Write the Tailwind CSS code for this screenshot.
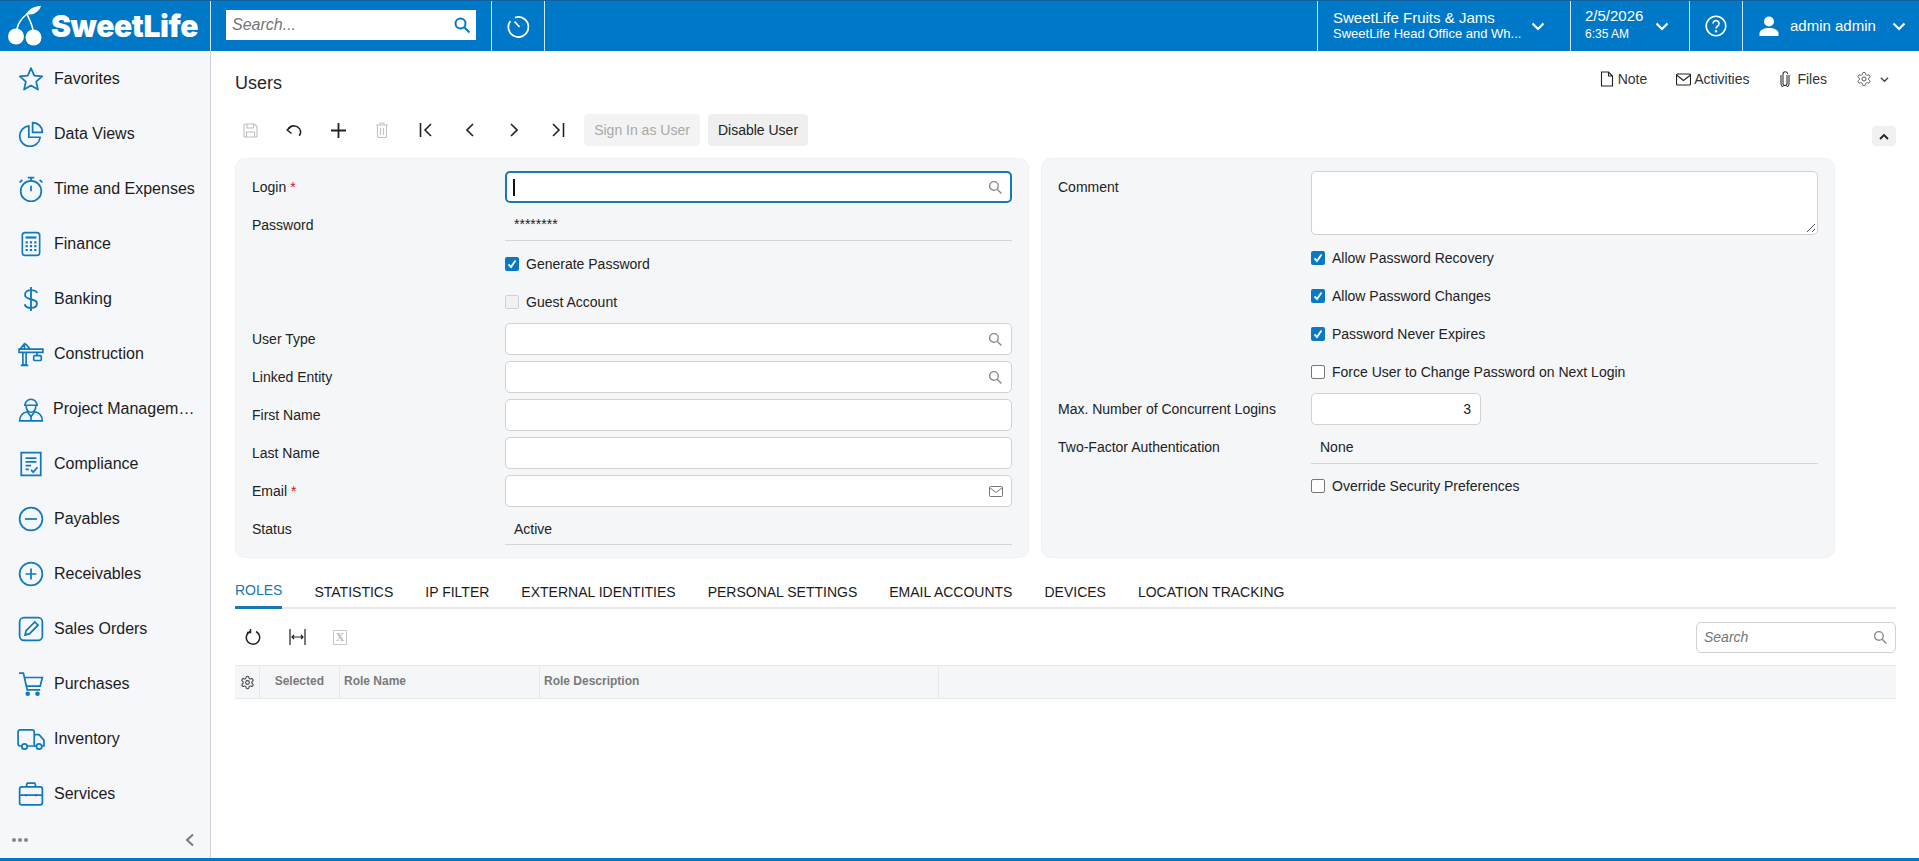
<!DOCTYPE html>
<html lang="en">
<head>
  <meta charset="UTF-8" />
  <title>Users</title>
  <script src="https://cdn.jsdelivr.net/npm/@tailwindcss/browser@4"></script>
</head>
<body class="h-screen overflow-hidden flex flex-col bg-white text-[14px] text-[#222] font-['Liberation_Sans',Arial,sans-serif]">

  <!-- Top bar -->
  <header class="h-[51px] shrink-0 flex bg-[#0078c8] border-t border-[#12609c] text-white">
    <div class="w-[211px] shrink-0 flex items-center border-r border-[#cfe6f5] relative">
      <svg class="ml-[7px] w-[36px] h-[42px] -mt-[2px]" viewBox="0 0 36 42" fill="none">
        <circle cx="9" cy="32.5" r="8" fill="#fff"/>
        <circle cx="26.5" cy="33.5" r="8" fill="#fff"/>
        <path d="M10 25 C11 19 15 14 20 10 C22 15 25 20 26 26" stroke="#fff" stroke-width="1.6"/>
        <path d="M19 10 C23 4 28 2 34 2 C32 8 26 12 19 10 Z" fill="#fff"/>
      </svg>
      <span class="ml-[8px] text-[30px] leading-none font-black tracking-[-0.4px] font-['Inter',sans-serif]">SweetLife</span>
    </div>
    <div class="w-[281px] shrink-0 flex items-center pl-[15px] border-r border-[#cfe6f5]">
      <div class="w-[250px] h-[30px] -mt-[2px] bg-white flex items-center justify-between pl-[6px] pr-[5px]">
        <span class="italic text-[16px] text-[#757575]">Search...</span>
        <svg class="w-[18px] h-[18px] text-[#0078c8]" viewBox="0 0 18 18" fill="none" stroke="currentColor" stroke-width="2"><circle cx="7.5" cy="7.5" r="5"/><path d="M11.5 11.5l5 5"/></svg>
      </div>
    </div>
    <div class="w-[53px] shrink-0 flex items-center justify-center border-r border-[#cfe6f5]">
      <svg class="w-[24px] h-[24px] ml-[1px]" viewBox="0 0 24 24" fill="none" stroke="currentColor" stroke-width="1.7"><path d="M8 3.6A10 10 0 1 1 3.4 7"/><path d="M7.5 7.5l5 5.5"/></svg>
    </div>
    <div class="flex-1"></div>
    <div class="w-[253px] shrink-0 flex items-center pl-[15px] border-l border-[#cfe6f5]">
      <div class="w-[198px] leading-[16px]">
        <div class="text-[15px] whitespace-nowrap">SweetLife Fruits &amp; Jams</div>
        <div class="text-[13px] whitespace-nowrap">SweetLife Head Office and Wh...</div>
      </div>
      <svg class="ml-[-1px] w-[16px] h-[16px]" viewBox="0 0 16 16" fill="none" stroke="currentColor" stroke-width="2.2"><path d="M2.5 5.5L8 11l5.5-5.5"/></svg>
    </div>
    <div class="w-[119px] shrink-0 flex items-center pl-[14px] border-l border-[#cfe6f5]">
      <div class="w-[69px] leading-[16px]">
        <div class="text-[15px] -mt-[2px] mb-[2px]">2/5/2026</div>
        <div class="text-[12px]">6:35 AM</div>
      </div>
      <svg class="w-[16px] h-[16px]" viewBox="0 0 16 16" fill="none" stroke="currentColor" stroke-width="2.2"><path d="M2.5 5.5L8 11l5.5-5.5"/></svg>
    </div>
    <div class="w-[53px] shrink-0 flex items-center justify-center border-l border-[#cfe6f5]">
      <svg class="w-[22px] h-[22px]" viewBox="0 0 22 22" fill="none" stroke="currentColor" stroke-width="1.6"><circle cx="11" cy="11" r="9.8"/><path d="M8 8.6a3 3 0 1 1 4.6 2.5c-1 .7-1.6 1.2-1.6 2.5"/><circle cx="11" cy="16.3" r=".5" fill="currentColor"/></svg>
    </div>
    <div class="flex-1 max-w-[177px] flex items-center pl-[16px] border-l border-[#cfe6f5]">
      <svg class="w-[20px] h-[20px]" viewBox="0 0 20 20" fill="currentColor"><circle cx="10" cy="5.5" r="5"/><path d="M0.5 20v-2.5C0.5 14 5 12 10 12s9.500 2 9.500 5.500V20z"/></svg>
      <span class="ml-[11px] text-[15px]">admin admin</span>
      <svg class="ml-[15px] w-[16px] h-[16px]" viewBox="0 0 16 16" fill="none" stroke="currentColor" stroke-width="2.2"><path d="M2.5 5.5L8 11l5.500-5.500"/></svg>
    </div>
  </header>

  <div class="flex-1 flex min-h-0">

    <!-- Sidebar -->
    <aside class="w-[211px] shrink-0 flex flex-col bg-[#f5f7fa] border-r border-[#cdd0d4] text-[16px] text-[#1c1c1c]">
      <nav class="flex-1">
        <a class="h-[55px] flex items-center">
          <svg class="w-[26px] h-[26px] ml-[18px] mr-[10px] text-[#0f79be]" viewBox="0 0 24 24" fill="none" stroke="currentColor" stroke-width="1.6" stroke-linejoin="round"><path d="M12 2l3 6.800 7.300.8-5.500 4.900 1.600 7.300L12 18.100l-6.400 3.700 1.600-7.300L1.700 9.600 9 8.800z"/></svg>
          <span>Favorites</span>
        </a>
        <a class="h-[55px] flex items-center">
          <svg class="w-[26px] h-[26px] ml-[18px] mr-[10px] text-[#0f79be]" viewBox="0 0 24 24" fill="none" stroke="currentColor" stroke-width="1.6" stroke-linejoin="round"><path d="M10 4.500a9.500 9.500 0 1 0 10.500 10.500H10z"/><path d="M13.500 1.500a9 9 0 0 1 9 9h-9z"/></svg>
          <span>Data Views</span>
        </a>
        <a class="h-[55px] flex items-center">
          <svg class="w-[26px] h-[26px] ml-[18px] mr-[10px] text-[#0f79be]" viewBox="0 0 24 24" fill="none" stroke="currentColor" stroke-width="1.6"><circle cx="12" cy="14" r="9.500"/><path d="M9 1.500h6M12 1.500v3M12 9v5M20 3.500l2.500 2.500M4 3.500L1.500 6"/></svg>
          <span>Time and Expenses</span>
        </a>
        <a class="h-[55px] flex items-center">
          <svg class="w-[26px] h-[26px] ml-[18px] mr-[10px] text-[#0f79be]" viewBox="0 0 24 24" fill="none" stroke="currentColor" stroke-width="1.500"><rect x="4" y="1.500" width="16" height="21" rx="2.500"/><path d="M7 6h10" stroke-width="2"/><path d="M7 10.500h10M7 14h10M7 17.500h10" stroke-width="2" stroke-dasharray="2 2"/></svg>
          <span>Finance</span>
        </a>
        <a class="h-[55px] flex items-center">
          <svg class="w-[26px] h-[26px] ml-[18px] mr-[10px] text-[#0f79be]" viewBox="0 0 24 24" fill="none" stroke="currentColor" stroke-width="1.700"><path d="M12 1v22M17.500 6.500C17 4.500 15 3.800 12 3.800c-3.500 0-5.500 1.700-5.500 4.200 0 5.800 11 2.700 11 8.200 0 2.500-2.200 4-5.500 4-3.200 0-5.300-1-5.800-3.400"/></svg>
          <span>Banking</span>
        </a>
        <a class="h-[55px] flex items-center">
          <svg class="w-[26px] h-[26px] ml-[18px] mr-[10px] text-[#0f79be]" viewBox="0 0 24 24" fill="none" stroke="currentColor" stroke-width="1.500"><path d="M1 7.500h22v3H1zM6 2.500L2 7.500M7 2.500l4 5M6 1.500v6M4.500 10.500v11.500h3V10.500M2.500 22.500h7"/><path d="M17.500 10.500v3"/><rect x="14.500" y="13.500" width="7" height="4.500" rx="1"/></svg>
          <span>Construction</span>
        </a>
        <a class="h-[55px] flex items-center">
          <svg class="w-[26px] h-[26px] ml-[18px] mr-[9px] text-[#0f79be]" viewBox="0 0 24 24" fill="none" stroke="currentColor" stroke-width="1.500"><path d="M6.500 8.500a5.500 5.500 0 0 1 11 0zM5.500 8.500h13M7.500 9c0 3.500 2 6 4.500 6s4.500-2.500 4.500-6"/><path d="M8.500 14.500C4 15.500 1.500 17.500 1.500 23h21c0-5.500-2.500-7.500-7-8.500L12 19z"/><path d="M12 19v4"/></svg>
          <span class="whitespace-nowrap">Project Managem…</span>
        </a>
        <a class="h-[55px] flex items-center">
          <svg class="w-[26px] h-[26px] ml-[18px] mr-[10px] text-[#0f79be]" viewBox="0 0 24 24" fill="none" stroke="currentColor" stroke-width="1.600"><path d="M3 1.500h18v21H3z"/><path d="M7 6.500h10M7 10h10M7 13.500h5M7 17h3M12 17.500l2 2 4-4.500"/></svg>
          <span>Compliance</span>
        </a>
        <a class="h-[55px] flex items-center">
          <svg class="w-[26px] h-[26px] ml-[18px] mr-[10px] text-[#0f79be]" viewBox="0 0 24 24" fill="none" stroke="currentColor" stroke-width="1.600"><circle cx="12" cy="12" r="10.500"/><path d="M6.500 12h11"/></svg>
          <span>Payables</span>
        </a>
        <a class="h-[55px] flex items-center">
          <svg class="w-[26px] h-[26px] ml-[18px] mr-[10px] text-[#0f79be]" viewBox="0 0 24 24" fill="none" stroke="currentColor" stroke-width="1.600"><circle cx="12" cy="12" r="10.500"/><path d="M7 12h10M12 7v10"/></svg>
          <span>Receivables</span>
        </a>
        <a class="h-[55px] flex items-center">
          <svg class="w-[26px] h-[26px] ml-[18px] mr-[10px] text-[#0f79be]" viewBox="0 0 24 24" fill="none" stroke="currentColor" stroke-width="1.600"><rect x="1.500" y="1.500" width="21" height="21" rx="4"/><path d="M6.500 17.500l1-4L15.500 5.500l3 3-8 8z"/></svg>
          <span>Sales Orders</span>
        </a>
        <a class="h-[55px] flex items-center">
          <svg class="w-[26px] h-[26px] ml-[18px] mr-[10px] text-[#0f79be]" viewBox="0 0 24 24" fill="none" stroke="currentColor" stroke-width="1.600"><path d="M1 2h4l3.500 15.500h12M6 6h16.500l-2 8H8"/><circle cx="9" cy="21" r="1.300" fill="currentColor"/><circle cx="18" cy="21" r="1.300" fill="currentColor"/></svg>
          <span>Purchases</span>
        </a>
        <a class="h-[55px] flex items-center">
          <svg class="w-[28px] h-[26px] ml-[17px] mr-[9px] text-[#0f79be]" viewBox="0 0 26 24" fill="none" stroke="currentColor" stroke-width="1.600"><path d="M4.500 18.500H3a2 2 0 0 1-2-2v-11a2 2 0 0 1 2-2h11a2 2 0 0 1 2 2v13H9.500"/><path d="M16 8h4.500l4.500 5v5.500h-2M16 18.500h2"/><circle cx="7" cy="19" r="2.500"/><circle cx="20.500" cy="19" r="2.500"/></svg>
          <span>Inventory</span>
        </a>
        <a class="h-[55px] flex items-center">
          <svg class="w-[26px] h-[26px] ml-[18px] mr-[10px] text-[#0f79be]" viewBox="0 0 24 24" fill="none" stroke="currentColor" stroke-width="1.600"><rect x="1.500" y="5.500" width="21" height="16.500" rx="2"/><path d="M8 5.500V3a1 1 0 0 1 1-1h6a1 1 0 0 1 1 1v2.500M1.500 13H7M17 13h5.500M7.500 12v2M16.500 12v2M7.500 13h9"/></svg>
          <span>Services</span>
        </a>
      </nav>
      <div class="h-[37px] shrink-0 flex items-center justify-between pl-[12px] pr-[14px] text-[#77797c]">
        <div class="flex gap-[2px]">
          <span class="w-[4px] h-[4px] rounded-full bg-[#85878a]"></span>
          <span class="w-[4px] h-[4px] rounded-full bg-[#85878a]"></span>
          <span class="w-[4px] h-[4px] rounded-full bg-[#85878a]"></span>
        </div>
        <svg class="w-[12px] h-[14px]" viewBox="0 0 12 14" fill="none" stroke="currentColor" stroke-width="2"><path d="M9 1.500L3 7l6 5.500"/></svg>
      </div>
    </aside>

    <!-- Main -->
    <main class="flex-1 min-w-0 pl-[24px] pr-[23px]">

      <div class="h-[63px] flex items-start justify-between">
        <h1 class="mt-[21px] text-[18px] leading-[22px] text-[#262626]">Users</h1>
        <div class="mt-[17px] h-[22px] flex items-center text-[#333]">
          <svg class="w-[14px] h-[16px] mr-[4px]" viewBox="0 0 14 16" fill="none" stroke="#222" stroke-width="1.100"><path d="M1.500 1h7l4 4v10h-11zM8.500 1v4h4"/></svg>
          <span>Note</span>
          <svg class="ml-[29px] w-[15px] h-[13px] mr-[3px]" viewBox="0 0 15 13" fill="none" stroke="#222" stroke-width="1.100"><rect x=".5" y="1" width="14" height="11" rx="1"/><path d="M.5 2l7 5.500 7-5.500"/></svg>
          <span>Activities</span>
          <svg class="ml-[31px] w-[10px] h-[16px] mr-[7px]" viewBox="0 0 10 16" fill="none" stroke="#333" stroke-width="1.100"><path d="M7 4v8.500a2 2 0 0 1-4 0V3a2.300 2.300 0 0 1 4.600 0M9 4v8.500a4 4 0 0 1-8 0V4"/></svg>
          <span>Files</span>
          <svg class="ml-[29px] w-[16px] h-[16px] text-[#555]" viewBox="0 0 24 24" fill="none" stroke="currentColor" stroke-width="1.500"><path d="M12.220 2h-.44a2 2 0 0 0-2 2v.18a2 2 0 0 1-1 1.730l-.43.250a2 2 0 0 1-2 0l-.15-.08a2 2 0 0 0-2.730.730l-.22.380a2 2 0 0 0 .730 2.730l.15.100a2 2 0 0 1 1 1.720v.510a2 2 0 0 1-1 1.740l-.15.090a2 2 0 0 0-.730 2.730l.22.380a2 2 0 0 0 2.730.730l.15-.08a2 2 0 0 1 2 0l.43.250a2 2 0 0 1 1 1.730V20a2 2 0 0 0 2 2h.44a2 2 0 0 0 2-2v-.18a2 2 0 0 1 1-1.730l.43-.250a2 2 0 0 1 2 0l.15.080a2 2 0 0 0 2.730-.730l.22-.390a2 2 0 0 0-.730-2.730l-.15-.080a2 2 0 0 1-1-1.740v-.500a2 2 0 0 1 1-1.740l.15-.090a2 2 0 0 0 .730-2.730l-.22-.380a2 2 0 0 0-2.730-.730l-.15.080a2 2 0 0 1-2 0l-.43-.250a2 2 0 0 1-1-1.730V4a2 2 0 0 0-2-2z"/><circle cx="12" cy="12" r="3"/></svg>
          <svg class="ml-[8px] mr-[7px] w-[9px] h-[9px] text-[#444]" viewBox="0 0 10 10" fill="none" stroke="currentColor" stroke-width="1.500"><path d="M1 3l4 4 4-4"/></svg>
        </div>
      </div>

      <!-- Toolbar -->
      <div class="h-[32px] flex justify-between">
        <div class="flex items-center">
          <button class="w-[44px] flex justify-center -ml-[7px] text-[#bdbdbd]">
            <svg class="w-[15px] h-[15px]" viewBox="0 0 15 15" fill="none" stroke="currentColor" stroke-width="1.100"><path d="M1 2a1 1 0 0 1 1-1h9.500L14 3.500V13a1 1 0 0 1-1 1H2a1 1 0 0 1-1-1zM4 1v4h6.500V1M3.500 14V9h8v5"/></svg>
          </button>
          <button class="w-[44px] flex justify-center text-[#222]">
            <svg class="w-[16px] h-[13px]" viewBox="0 0 16 13" fill="none" stroke="currentColor" stroke-width="1.500"><path d="M5.500 2.500L1.200 6l4.300 3.500M1.500 6C3 3 6 1.500 9 2c4 .5 6 4 5.500 7-.2 1-.5 2-1.500 2.500"/></svg>
          </button>
          <button class="w-[44px] flex justify-center text-[#222]">
            <svg class="w-[15px] h-[15px]" viewBox="0 0 15 15" fill="none" stroke="currentColor" stroke-width="1.800"><path d="M7.500 0v15M0 7.500h15"/></svg>
          </button>
          <button class="w-[44px] flex justify-center text-[#c4c4c4]">
            <svg class="w-[12px] h-[16px]" viewBox="0 0 12 16" fill="none" stroke="currentColor" stroke-width="1.100"><path d="M1.500 3.500v11a1 1 0 0 0 1 1h7a1 1 0 0 0 1-1v-11M0 3h12M4 3V1h4v2M4.500 6v7M7.500 6v7"/></svg>
          </button>
          <button class="w-[44px] flex justify-center text-[#222]">
            <svg class="w-[14px] h-[14px]" viewBox="0 0 14 14" fill="none" stroke="currentColor" stroke-width="1.600"><path d="M1.500 0v14M12 1L6 7l6 6"/></svg>
          </button>
          <button class="w-[44px] flex justify-center text-[#222]">
            <svg class="w-[8px] h-[14px]" viewBox="0 0 8 14" fill="none" stroke="currentColor" stroke-width="1.600"><path d="M7 1L1 7l6 6"/></svg>
          </button>
          <button class="w-[44px] flex justify-center text-[#222]">
            <svg class="w-[8px] h-[14px]" viewBox="0 0 8 14" fill="none" stroke="currentColor" stroke-width="1.600"><path d="M1 1l6 6-6 6"/></svg>
          </button>
          <button class="w-[44px] flex justify-center text-[#222]">
            <svg class="w-[14px] h-[14px]" viewBox="0 0 14 14" fill="none" stroke="currentColor" stroke-width="1.600"><path d="M12.500 0v14M2 1l6 6-6 6"/></svg>
          </button>
          <button class="ml-[4px] h-[32px] w-[116px] rounded-[4px] bg-[#f3f3f3] text-[#a8a8a8]">Sign In as User</button>
          <button class="ml-[8px] h-[32px] w-[100px] rounded-[4px] bg-[#efefef] text-[#222]">Disable User</button>
        </div>
        <button class="self-end w-[24px] h-[20px] rounded-[4px] bg-[#f0f0f0] flex items-center justify-center text-[#222]">
          <svg class="w-[10px] h-[7px]" viewBox="0 0 10 7" fill="none" stroke="currentColor" stroke-width="1.800"><path d="M1 6l4-4 4 4"/></svg>
        </button>
      </div>

      <!-- Form cards -->
      <div class="mt-[12px] w-[1600px] h-[400px] flex gap-[12px]">
        <section class="w-[794px] rounded-[10px] bg-[#f4f6f8] border border-[#eef0f2] pt-[9px] pl-[16px] pr-[16px]">
          <div class="h-[38px] flex items-center">
            <label class="w-[253px]">Login <span class="text-[#e01010]">*</span></label>
            <div class="flex-1 h-[32px] bg-white rounded-[5px] border-2 border-[#1778b4] flex items-center justify-between pl-[6px] pr-[8px]">
              <span class="w-[2px] h-[17px] bg-[#111]"></span>
              <svg class="w-[14px] h-[14px] text-[#8a8a8a]" viewBox="0 0 13 13" fill="none" stroke="currentColor" stroke-width="1.300"><circle cx="5.500" cy="5.500" r="4"/><path d="M8.500 8.500l4 4"/></svg>
            </div>
          </div>
          <div class="h-[38px] flex items-center">
            <label class="w-[253px]">Password</label>
            <div class="flex-1 h-[32px] border-b border-[#d4d6d9] flex items-center pl-[9px]">********</div>
          </div>
          <div class="h-[38px] pt-[2px] flex items-center pl-[253px]">
            <span class="w-[14px] h-[14px] rounded-[2px] bg-[#0a78c4] flex items-center justify-center">
              <svg class="w-[10px] h-[10px]" viewBox="0 0 10 10" fill="none" stroke="#fff" stroke-width="1.800"><path d="M1.500 5.500L4 8l4.500-6.500"/></svg>
            </span>
            <span class="ml-[7px]">Generate Password</span>
          </div>
          <div class="h-[38px] pt-[2px] flex items-center pl-[253px]">
            <span class="w-[14px] h-[14px] rounded-[2px] bg-[#f0f1f3] border border-[#cfd1d4]"></span>
            <span class="ml-[7px]">Guest Account</span>
          </div>
          <div class="h-[38px] flex items-center">
            <label class="w-[253px]">User Type</label>
            <div class="flex-1 h-[32px] bg-white rounded-[5px] border border-[#cfd1d4] flex items-center justify-end pr-[9px]">
              <svg class="w-[14px] h-[14px] text-[#8a8a8a]" viewBox="0 0 13 13" fill="none" stroke="currentColor" stroke-width="1.300"><circle cx="5.500" cy="5.500" r="4"/><path d="M8.500 8.500l4 4"/></svg>
            </div>
          </div>
          <div class="h-[38px] flex items-center">
            <label class="w-[253px]">Linked Entity</label>
            <div class="flex-1 h-[32px] bg-white rounded-[5px] border border-[#cfd1d4] flex items-center justify-end pr-[9px]">
              <svg class="w-[14px] h-[14px] text-[#8a8a8a]" viewBox="0 0 13 13" fill="none" stroke="currentColor" stroke-width="1.300"><circle cx="5.500" cy="5.500" r="4"/><path d="M8.500 8.500l4 4"/></svg>
            </div>
          </div>
          <div class="h-[38px] flex items-center">
            <label class="w-[253px]">First Name</label>
            <div class="flex-1 h-[32px] bg-white rounded-[5px] border border-[#cfd1d4]"></div>
          </div>
          <div class="h-[38px] flex items-center">
            <label class="w-[253px]">Last Name</label>
            <div class="flex-1 h-[32px] bg-white rounded-[5px] border border-[#cfd1d4]"></div>
          </div>
          <div class="h-[38px] flex items-center">
            <label class="w-[253px]">Email <span class="text-[#e01010]">*</span></label>
            <div class="flex-1 h-[32px] bg-white rounded-[5px] border border-[#cfd1d4] flex items-center justify-end pr-[8px]">
              <svg class="w-[14px] h-[11px] text-[#777]" viewBox="0 0 14 11" fill="none" stroke="currentColor" stroke-width="1"><rect x=".5" y=".5" width="13" height="10" rx="1"/><path d="M.5 1.500l6.500 5 6.500-5"/></svg>
            </div>
          </div>
          <div class="h-[38px] flex items-center">
            <label class="w-[253px]">Status</label>
            <div class="flex-1 h-[32px] pt-[1px] border-b border-[#d4d6d9] flex items-center pl-[9px]">Active</div>
          </div>
        </section>

        <section class="w-[794px] rounded-[10px] bg-[#f4f6f8] border border-[#eef0f2] pt-[9px] pl-[16px] pr-[16px]">
          <div class="h-[71px] flex items-start">
            <label class="w-[253px] mt-[9px]">Comment</label>
            <div class="flex-1 mt-[3px] h-[64px] bg-white rounded-[5px] border border-[#cfd1d4] flex items-end justify-end">
              <svg class="w-[10px] h-[10px] mb-[1px] mr-[1px] text-[#555]" viewBox="0 0 10 10" fill="none" stroke="currentColor" stroke-width="1"><path d="M1 9l8-8M6 9l3-3"/></svg>
            </div>
          </div>
          <div class="h-[38px] flex items-center pl-[253px]">
            <span class="w-[14px] h-[14px] rounded-[2px] bg-[#0a78c4] flex items-center justify-center">
              <svg class="w-[10px] h-[10px]" viewBox="0 0 10 10" fill="none" stroke="#fff" stroke-width="1.800"><path d="M1.500 5.500L4 8l4.500-6.500"/></svg>
            </span>
            <span class="ml-[7px]">Allow Password Recovery</span>
          </div>
          <div class="h-[38px] flex items-center pl-[253px]">
            <span class="w-[14px] h-[14px] rounded-[2px] bg-[#0a78c4] flex items-center justify-center">
              <svg class="w-[10px] h-[10px]" viewBox="0 0 10 10" fill="none" stroke="#fff" stroke-width="1.800"><path d="M1.500 5.500L4 8l4.500-6.500"/></svg>
            </span>
            <span class="ml-[7px]">Allow Password Changes</span>
          </div>
          <div class="h-[38px] flex items-center pl-[253px]">
            <span class="w-[14px] h-[14px] rounded-[2px] bg-[#0a78c4] flex items-center justify-center">
              <svg class="w-[10px] h-[10px]" viewBox="0 0 10 10" fill="none" stroke="#fff" stroke-width="1.800"><path d="M1.500 5.500L4 8l4.500-6.500"/></svg>
            </span>
            <span class="ml-[7px]">Password Never Expires</span>
          </div>
          <div class="h-[38px] flex items-center pl-[253px]">
            <span class="w-[14px] h-[14px] rounded-[2px] bg-white border border-[#767676]"></span>
            <span class="ml-[7px]">Force User to Change Password on Next Login</span>
          </div>
          <div class="h-[38px] pb-[2px] flex items-center">
            <label class="w-[253px]">Max. Number of Concurrent Logins</label>
            <div class="w-[170px] h-[32px] bg-white rounded-[5px] border border-[#cfd1d4] flex items-center justify-end pr-[9px]">3</div>
          </div>
          <div class="h-[38px] flex items-center">
            <label class="w-[253px] -mt-[1px]">Two-Factor Authentication</label>
            <div class="flex-1 h-[32px] -mt-[1px] border-b border-[#d4d6d9] flex items-center pl-[9px]">None</div>
          </div>
          <div class="h-[38px] flex items-center pl-[253px]">
            <span class="w-[14px] h-[14px] rounded-[2px] bg-white border border-[#767676]"></span>
            <span class="ml-[7px]">Override Security Preferences</span>
          </div>
        </section>
      </div>

      <!-- Tabs -->
      <div class="mt-[15px] h-[36px] flex gap-[32px] border-b-2 border-[#e6e8ea] text-[#1a1a1a]">
        <a class="h-[36px] pt-[2px] flex items-center border-b-[3px] border-[#1778b4] text-[#1778b4]">ROLES</a>
        <a class="h-[36px] pt-[2px] flex items-center">STATISTICS</a>
        <a class="h-[36px] pt-[2px] flex items-center">IP FILTER</a>
        <a class="h-[36px] pt-[2px] flex items-center">EXTERNAL IDENTITIES</a>
        <a class="h-[36px] pt-[2px] flex items-center">PERSONAL SETTINGS</a>
        <a class="h-[36px] pt-[2px] flex items-center">EMAIL ACCOUNTS</a>
        <a class="h-[36px] pt-[2px] flex items-center">DEVICES</a>
        <a class="h-[36px] pt-[2px] flex items-center">LOCATION TRACKING</a>
      </div>

      <!-- Grid toolbar -->
      <div class="h-[56px] flex items-center justify-between">
        <div class="flex items-center">
          <svg class="w-[16px] h-[17px] ml-[10px] text-[#222]" viewBox="0 0 16 17" fill="none" stroke="currentColor" stroke-width="1.500"><path d="M5 2.500a6.700 6.700 0 1 0 6 0M5.500 0v3.500H2"/></svg>
          <svg class="w-[17px] h-[16px] ml-[28px] text-[#222]" viewBox="0 0 17 16" fill="none" stroke="currentColor" stroke-width="1.200"><path d="M1 0v16M16 0v16M3 8h11M5 6L3 8l2 2M12 6l2 2-2 2"/></svg>
          <span class="ml-[27px] w-[14px] h-[15px] border border-[#c8c8c8] flex items-center justify-center text-[12px] leading-none font-bold text-[#bcbcbc] font-['Liberation_Serif',serif]">X</span>
        </div>
        <div class="w-[200px] h-[31px] rounded-[5px] border border-[#cfd1d4] flex items-center justify-between pl-[7px] pr-[8px]">
          <span class="italic text-[#757575]">Search</span>
          <svg class="w-[14px] h-[14px] text-[#8a8a8a]" viewBox="0 0 13 13" fill="none" stroke="currentColor" stroke-width="1.300"><circle cx="5.500" cy="5.500" r="4"/><path d="M8.500 8.500l4 4"/></svg>
        </div>
      </div>

      <!-- Grid header -->
      <div class="h-[34px] pb-[2px] flex bg-[#f4f6f8] border-y border-[#e6e8ea] text-[12px] font-bold text-[#7a7a7a]">
        <div class="w-[25px] -mb-[2px] flex items-center justify-center border-r border-[#e6e8ea]">
          <svg class="w-[15px] h-[15px] text-[#444]" viewBox="0 0 24 24" fill="none" stroke="currentColor" stroke-width="1.700"><path d="M12.220 2h-.44a2 2 0 0 0-2 2v.18a2 2 0 0 1-1 1.730l-.43.250a2 2 0 0 1-2 0l-.15-.08a2 2 0 0 0-2.730.730l-.22.380a2 2 0 0 0 .730 2.730l.15.100a2 2 0 0 1 1 1.720v.510a2 2 0 0 1-1 1.740l-.15.090a2 2 0 0 0-.730 2.730l.22.380a2 2 0 0 0 2.730.730l.15-.08a2 2 0 0 1 2 0l.43.250a2 2 0 0 1 1 1.730V20a2 2 0 0 0 2 2h.44a2 2 0 0 0 2-2v-.18a2 2 0 0 1 1-1.730l.43-.250a2 2 0 0 1 2 0l.15.080a2 2 0 0 0 2.730-.730l.22-.390a2 2 0 0 0-.730-2.730l-.15-.080a2 2 0 0 1-1-1.740v-.500a2 2 0 0 1 1-1.740l.15-.090a2 2 0 0 0 .730-2.730l-.22-.380a2 2 0 0 0-2.730-.730l-.15.080a2 2 0 0 1-2 0l-.43-.250a2 2 0 0 1-1-1.730V4a2 2 0 0 0-2-2z"/><circle cx="12" cy="12" r="3"/></svg>
        </div>
        <div class="w-[80px] -mb-[2px] pb-[2px] flex items-center justify-end pr-[15px] border-r border-[#e6e8ea]">Selected</div>
        <div class="w-[200px] -mb-[2px] pb-[2px] flex items-center pl-[4px] border-r border-[#e6e8ea]">Role Name</div>
        <div class="w-[399px] -mb-[2px] pb-[2px] flex items-center pl-[4px] border-r border-[#e6e8ea]">Role Description</div>
      </div>
    </main>
  </div>

  <div class="h-[3px] shrink-0 bg-[#0078c8]"></div>
</body>
</html>
